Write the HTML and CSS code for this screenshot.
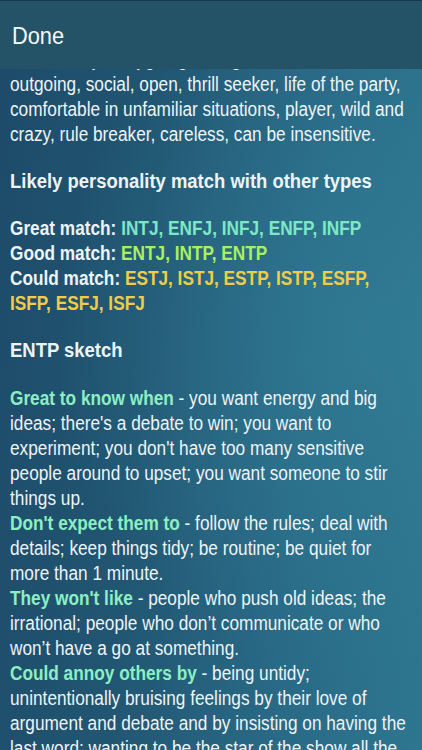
FILE: index.html
```html
<!DOCTYPE html>
<html lang="en">
<head>
  <meta charset="UTF-8">
  <meta name="viewport" content="width=device-width, initial-scale=1.0">
  <title>ENTP</title>
  <link rel="stylesheet" href="styles.css">
</head>
<body>
  <header class="topbar">
    <span class="done">Done</span>
  </header>

  <main class="content">
    <p class="text">
      Traits: lively, easygoing, energetic,<br>
      outgoing, social, open, thrill seeker, life of the party, comfortable in unfamiliar situations, player, wild and crazy, rule breaker, careless, can be insensitive.
    </p>

    <h2 class="heading">Likely personality match with other types</h2>

    <p class="text">
      <b>Great match:</b> <b class="great">INTJ, ENFJ, INFJ, ENFP, INFP</b><br>
      <b>Good match:</b> <b class="good">ENTJ, INTP, ENTP</b><br>
      <b>Could match:</b> <b class="could">ESTJ, ISTJ, ESTP, ISTP, ESFP, ISFP, ESFJ, ISFJ</b>
    </p>

    <h2 class="heading">ENTP sketch</h2>

    <p class="text">
      <b class="label">Great to know when</b> - you want energy and big ideas; there's a debate to win; you want to experiment; you don't have too many sensitive people around to upset; you want someone to stir things up.<br>
      <b class="label">Don't expect them to</b> - follow the rules; deal with details; keep things tidy; be routine; be quiet for more than 1 minute.<br>
      <b class="label">They won't like</b> - people who push old ideas; the irrational; people who don’t communicate or who won’t have a go at something.<br>
      <b class="label">Could annoy others by</b> - being untidy; unintentionally bruising feelings by their love of argument and debate and by insisting on having the last word; wanting to be the star of the show all the time.
    </p>
  </main>
</body>
</html>
```

FILE: styles.css
```css
html, body {
  margin: 0;
  height: 100%;
}

body {
  font-family: "Liberation Sans", Arial, sans-serif;
  font-size: 19.5px;
  line-height: 25px;
  color: #eef4f6;
  background-color: #24607c;
  background-image:
    radial-gradient(ellipse at 85% 45%, rgba(52, 130, 154, 0.55), rgba(52, 130, 154, 0) 60%),
    linear-gradient(95deg, #1d4b69 0%, #215672 35%, #296a86 70%, #2e7690 100%);
  overflow: hidden;
}

.topbar {
  position: fixed;
  top: 0;
  left: 0;
  right: 0;
  height: 68px;
  border-top: 1px solid #163a4e;
  background-color: #245368;
  display: flex;
  align-items: center;
  padding: 0 12px;
  z-index: 2;
}

.done {
  display: inline-block;
  font-size: 23.2px;
  color: #f6f8f9;
  transform: scaleX(0.94);
  transform-origin: left center;
  margin-top: 2px;
}

.content {
  padding: 46.75px 10px 0;
}

/* the screenshot text is narrow, so squeeze it sideways */
.text {
  margin: 0;
  width: 452px;
  transform: scaleX(0.884);
  transform-origin: left top;
}

.heading {
  font-size: 19.5px;
  line-height: 25px;
  font-weight: bold;
  margin: 22px 0 22.5px;
  white-space: nowrap;
  transform: scaleX(0.946);
  transform-origin: left top;
}

.great {
  color: #7de8c6;
}

.good {
  color: #a9f060;
}

.could {
  color: #f0cc48;
}

.label {
  color: #8cefc2;
}
```
